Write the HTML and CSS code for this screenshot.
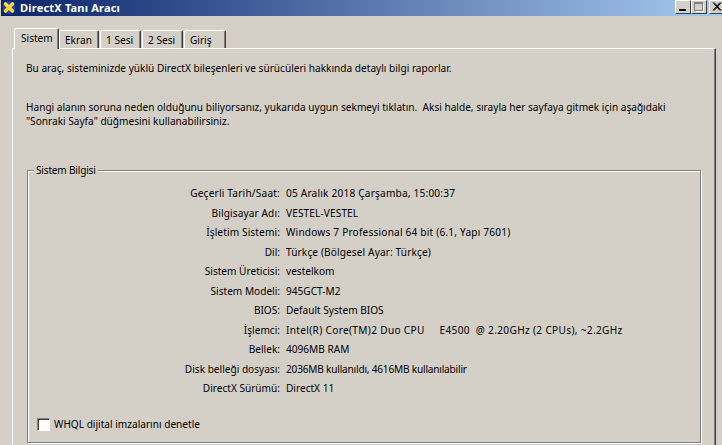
FILE: index.html
```html
<!DOCTYPE html>
<html lang="tr">
<head>
<meta charset="utf-8">
<title>DirectX Tanı Aracı</title>
<link rel="stylesheet" href="styles.css">
</head>
<body>
<div class="window">
  <header class="titlebar">
    <svg class="app-icon" width="16" height="16" viewBox="0 0 16 16">
      <circle cx="8" cy="7.5" r="6.5" fill="#2340c0"/>
      <path d="M4.5 4 L11.5 11 M11.5 4 L4.5 11" stroke="#f7dc2e" stroke-width="3.6" stroke-linecap="round"/>
      <path d="M4 3.5 L6 5.5" stroke="#fff8b0" stroke-width="1"/>
    </svg>
    <span class="title-text">DirectX Tanı Aracı</span>
    <div class="title-buttons">
      <div class="tb-btn"><svg width="14" height="12" viewBox="0 0 14 12"><rect x="3" y="8" width="7" height="2" fill="#000"/></svg></div>
      <div class="tb-btn"><svg width="14" height="12" viewBox="0 0 14 12"><rect x="2.5" y="1.5" width="8" height="8" fill="none" stroke="#808080"/><rect x="2" y="1" width="9" height="2" fill="#808080"/><path d="M11.5 3V10.5H4" fill="none" stroke="#fff"/></svg></div>
      <div class="tb-btn tb-close"><svg width="14" height="12" viewBox="0 0 14 12"><path d="M3 1.5 L10 9.5 M4.2 1.5 L11.2 9.5 M10 1.5 L3 9.5 M11.2 1.5 L4.2 9.5" stroke="#000" stroke-width="1"/></svg></div>
    </div>
  </header>
  <div class="tabs">
    <div class="tab tab-active">Sistem</div>
    <div class="tab tab-w40">Ekran</div>
    <div class="tab tab-w41">1 Sesi</div>
    <div class="tab tab-w41">2 Sesi</div>
    <div class="tab tab-w42">Giriş</div>
  </div>
  <main class="panel">
    <p class="intro">Bu araç, sisteminizde yüklü DirectX bileşenleri ve sürücüleri hakkında detaylı bilgi raporlar.</p>
    <p class="hint">Hangi alanın soruna neden olduğunu biliyorsanız, yukarıda uygun sekmeyi tıklatın.&nbsp; Aksi halde, sırayla her sayfaya gitmek için aşağıdaki<br>"Sonraki Sayfa" düğmesini kullanabilirsiniz.</p>
    <section class="group">
      <span class="group-label">Sistem Bilgisi</span>
      <dl class="info">
        <dt class="loose">Geçerli Tarih/Saat:</dt><dd class="loose">05 Aralık 2018 Çarşamba, 15:00:37</dd>
        <dt class="slight">Bilgisayar Adı:</dt><dd class="slight">VESTEL-VESTEL</dd>
        <dt class="slight">İşletim Sistemi:</dt><dd class="loose">Windows 7 Professional 64 bit (6.1, Yapı 7601)</dd>
        <dt>Dil:</dt><dd class="slight">Türkçe (Bölgesel Ayar: Türkçe)</dd>
        <dt>Sistem Üreticisi:</dt><dd>vestelkom</dd>
        <dt>Sistem Modeli:</dt><dd>945GCT-M2</dd>
        <dt>BIOS:</dt><dd>Default System BIOS</dd>
        <dt>İşlemci:</dt><dd class="cpu">Intel(R) Core(TM)2 Duo CPU&nbsp; &nbsp; &nbsp;E4500&nbsp; @ 2.20GHz (2 CPUs), ~2.2GHz</dd>
        <dt>Bellek:</dt><dd>4096MB RAM</dd>
        <dt>Disk belleği dosyası:</dt><dd class="tight">2036MB kullanıldı, 4616MB kullanılabilir</dd>
        <dt>DirectX Sürümü:</dt><dd>DirectX 11</dd>
      </dl>
      <label class="check"><span class="check-box"></span>WHQL dijital imzalarını denetle</label>
    </section>
  </main>
</div>
</body>
</html>
```
FILE: styles.css
```css
* { box-sizing: border-box; }
html, body { margin: 0; padding: 0; overflow: hidden; }
body {
  width: 722px;
  height: 445px;
  background: #d4d0c8;
  color: #000;
  font: 10.1px/13px "Noto Sans", "Liberation Sans", sans-serif;
}
.window { width: 722px; height: 445px; padding-left: 1px; overflow: hidden; }
.titlebar {
  height: 16px;
  display: flex;
  align-items: center;
  background: linear-gradient(90deg, #0a246a 0%, #a6caf0 100%);
  color: #fff;
  font: bold 11px/16px "Noto Sans", "Liberation Sans", sans-serif;
}
.app-icon { flex: none; }
.title-text { margin-left: 3px; letter-spacing: 0.2px; }
.title-buttons { margin-left: auto; margin-right: -3px; display: flex; align-self: flex-start; }
.tb-btn {
  width: 16px;
  height: 14px;
  background: #d4d0c8;
  border-style: solid;
  border-width: 1px;
  border-color: #fff #404040 #404040 #fff;
  display: flex;
  align-items: center;
  justify-content: center;
  overflow: hidden;
}
.tb-btn svg { flex: none; }
.tb-close { margin-left: 2px; }
.tabs {
  display: flex;
  gap: 1px;
  height: 32px;
  margin-left: 12px;
  align-items: flex-end;
  padding-top: 12px;
}
.tab {
  height: 18px;
  padding-left: 5px;
  background: #d4d0c8;
  border-style: solid;
  border-width: 1px 1px 0 1px;
  border-color: #fff #404040 transparent #fff;
  border-radius: 2px 2px 0 0;
  box-shadow: inset -1px 0 0 #808080;
  line-height: 18px;
}
.tab-w40 { width: 40px; }
.tab-w41 { width: 41px; }
.tab-w42 { width: 42px; }
.tab-active {
  width: 45px;
  height: 21px;
  padding-left: 6px;
  margin-left: 1px;
  margin-right: -1px;
  margin-bottom: -1px;
  position: relative;
  z-index: 1;
}
.panel {
  width: 704px;
  height: 397px;
  margin-left: 11px;
  border-style: solid;
  border-width: 1px 1px 0 1px;
  border-color: #fff #404040 #404040 #fff;
  box-shadow: inset -1px 0 0 #808080;
  padding: 13px 0 0 13px;
}
.intro { margin: 0; white-space: nowrap; }
.hint { margin: 25px 0 0; line-height: 14px; white-space: nowrap; }
.group {
  position: relative;
  width: 674px;
  height: 273px;
  margin-top: 42px;
  margin-left: 1px;
  border: 1px solid #808080;
  box-shadow: 1px 1px 0 #fff, inset 1px 1px 0 #fff;
}
.group-label {
  position: absolute;
  left: 6px;
  top: -7px;
  padding: 0 2px;
  background: #d4d0c8;
  line-height: 13px;
  letter-spacing: -0.2px;
}
.info {
  display: grid;
  grid-template-columns: 252px 1fr;
  column-gap: 6px;
  grid-auto-rows: 19.5px;
  margin: 16px 0 0;
}
.info dt { text-align: right; }
.info dd { margin: 0; white-space: nowrap; }
.info .loose { letter-spacing: 0.2px; }
.info .slight { letter-spacing: 0.12px; }
.info .cpu { letter-spacing: 0.33px; }
.info .tight { letter-spacing: -0.2px; }
.check {
  display: flex;
  align-items: center;
  gap: 4px;
  margin: 16px 0 0 9px;
}
.check-box {
  width: 13px;
  height: 13px;
  background: #fff;
  border-style: solid;
  border-width: 1px;
  border-color: #808080 #fff #fff #808080;
  box-shadow: inset 1px 1px 0 #404040;
}
```
